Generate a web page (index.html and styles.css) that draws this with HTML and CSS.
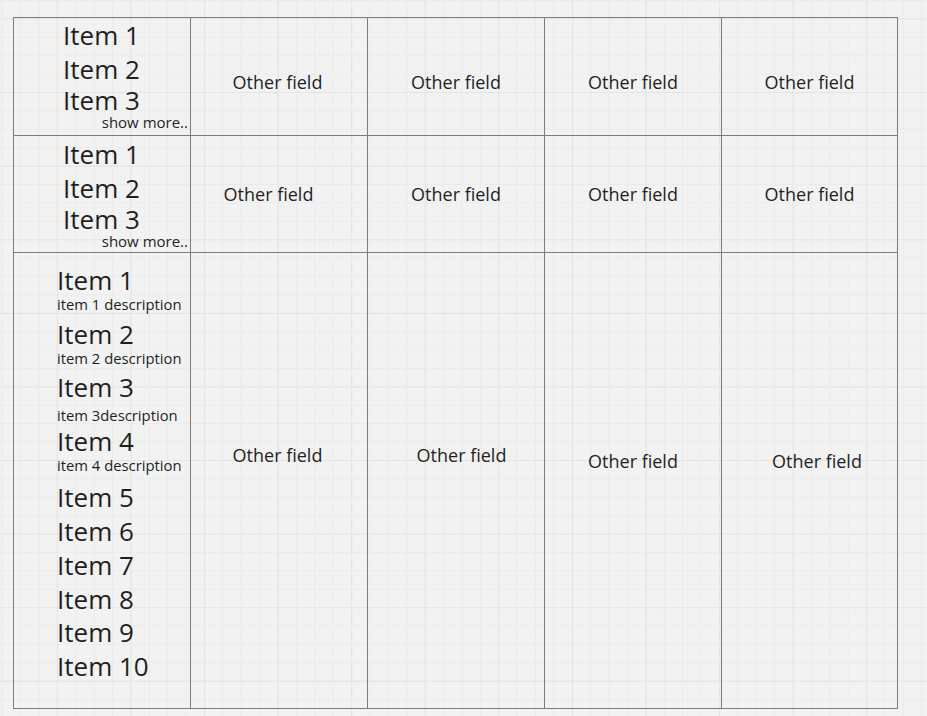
FILE: index.html
```html
<!DOCTYPE html>
<html lang="en">
<head>
<meta charset="utf-8">
<title>Items table</title>
<link rel="stylesheet" href="styles.css">
</head>
<body>
<div class="sheet">
  <div class="cell list list--r1">
    <div class="item">Item 1</div>
    <div class="item item--down">Item 2</div>
    <div class="item item--up">Item 3</div>
    <div class="more">show more..</div>
  </div>
  <div class="cell field field--r1 field--nudge"><span>Other field</span></div>
  <div class="cell field field--r1"><span>Other field</span></div>
  <div class="cell field field--r1"><span>Other field</span></div>
  <div class="cell field field--r1"><span>Other field</span></div>

  <div class="cell list list--r2">
    <div class="item">Item 1</div>
    <div class="item item--down">Item 2</div>
    <div class="item item--up">Item 3</div>
    <div class="more">show more..</div>
  </div>
  <div class="cell field field--r2 field--left"><span>Other field</span></div>
  <div class="cell field field--r2"><span>Other field</span></div>
  <div class="cell field field--r2"><span>Other field</span></div>
  <div class="cell field field--r2"><span>Other field</span></div>

  <div class="cell detail">
    <div class="entry"><div class="title">Item 1</div><div class="desc">item 1 description</div></div>
    <div class="entry"><div class="title">Item 2</div><div class="desc">item 2 description</div></div>
    <div class="entry"><div class="title">Item 3</div><div class="desc desc--low">item 3description</div></div>
    <div class="entry"><div class="title">Item 4</div><div class="desc">item 4 description</div></div>
    <div class="entry entry--gap"><div class="title">Item 5</div></div>
    <div class="entry"><div class="title">Item 6</div></div>
    <div class="entry entry--nudge"><div class="title">Item 7</div></div>
    <div class="entry"><div class="title">Item 8</div></div>
    <div class="entry"><div class="title">Item 9</div></div>
    <div class="entry"><div class="title">Item 10</div></div>
  </div>
  <div class="cell field field--r3 field--nudge"><span>Other field</span></div>
  <div class="cell field field--r3 field--right-a"><span>Other field</span></div>
  <div class="cell field field--r3b"><span>Other field</span></div>
  <div class="cell field field--r3b field--right-b"><span>Other field</span></div>
</div>
</body>
</html>
```

FILE: styles.css
```css
html {
  min-height: 100%;
  background-color: #f2f2f2;
  background-image:
    linear-gradient(to right, #e4e4e4 1px, transparent 1px),
    linear-gradient(to bottom, #e4e4e4 1px, transparent 1px),
    linear-gradient(to right, #ebebeb 1px, transparent 1px),
    linear-gradient(to bottom, #ebebeb 1px, transparent 1px);
  background-size: 73.6px 100%, 100% 73.6px, 18.4px 100%, 100% 18.4px;
  background-position: 56.9px 0, 0 18.5px, 1.7px 0, 0 0.1px;
}

body {
  margin: 0;
  font-family: "Open Sans", "Noto Sans", sans-serif;
  color: #1f1f1f;
}

.sheet {
  display: grid;
  grid-template-columns: repeat(4, 177px) 176px;
  grid-template-rows: 118px 117px 456px;
  width: max-content;
  margin: 17px 0 0 13px;
  border-left: 1px solid #7c7c7c;
  border-top: 1px solid #7c7c7c;
}

.cell {
  box-sizing: border-box;
  border-right: 1px solid #7c7c7c;
  border-bottom: 1px solid #7c7c7c;
  min-width: 0;
}

/* compact lists (rows 1 and 2) */
.list {
  padding-left: 49px;
  padding-right: 2px;
}
.list--r1 { padding-top: 1px; }
.list--r2 { padding-top: 2px; }

.item {
  font-size: 26px;
  line-height: 33px;
  white-space: nowrap;
}
.item--down { margin-top: 1px; }
.item--up { margin-top: -2px; }

.more {
  font-size: 15px;
  line-height: 14px;
  margin-top: -2px;
  text-align: right;
  white-space: nowrap;
}

/* detailed list (row 3) */
.detail {
  padding: 13px 0 0 43px;
}
.entry {
  margin-bottom: 5.5px;
}
.entry--gap { padding-top: 3px; }
.entry--nudge { padding-top: 1px; }
.title {
  font-size: 26px;
  line-height: 28px;
  white-space: nowrap;
}
.desc {
  font-size: 14.8px;
  line-height: 20px;
  white-space: nowrap;
}
.desc--low { margin-top: 4px; margin-bottom: -4px; }

/* other field cells */
.field {
  display: flex;
  justify-content: center;
  align-items: flex-start;
  font-size: 18px;
  line-height: 24px;
  white-space: nowrap;
}
.field--r1 { padding-top: 52px; }
.field--r2 { padding-top: 46px; }
.field--r3 { padding-top: 190px; }
.field--r3b { padding-top: 196px; }
.field--nudge { padding-right: 3px; }
.field--left { padding-right: 21px; }
.field--right-a { padding-left: 11px; }
.field--right-b { padding-left: 15px; }
```
